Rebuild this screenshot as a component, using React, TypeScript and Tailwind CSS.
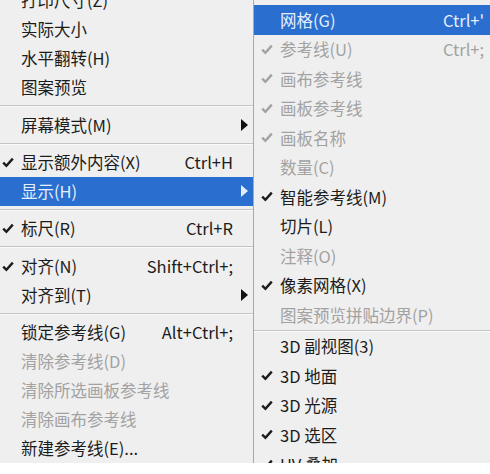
type Item =
  | { sep: true }
  | {
      sep?: false;
      label: string;
      shortcut?: string;
      checked?: boolean;
      disabled?: boolean;
      arrow?: boolean;
      active?: boolean;
    };

const leftItems: Item[] = [
  { label: '打印尺寸(Z)' },
  { label: '实际大小' },
  { label: '水平翻转(H)' },
  { label: '图案预览' },
  { sep: true },
  { label: '屏幕模式(M)', arrow: true },
  { sep: true },
  { label: '显示额外内容(X)', shortcut: 'Ctrl+H', checked: true },
  { label: '显示(H)', arrow: true, active: true },
  { sep: true },
  { label: '标尺(R)', shortcut: 'Ctrl+R', checked: true },
  { sep: true },
  { label: '对齐(N)', shortcut: 'Shift+Ctrl+;', checked: true },
  { label: '对齐到(T)', arrow: true },
  { sep: true },
  { label: '锁定参考线(G)', shortcut: 'Alt+Ctrl+;' },
  { label: '清除参考线(D)', disabled: true },
  { label: '清除所选画板参考线', disabled: true },
  { label: '清除画布参考线', disabled: true },
  { label: '新建参考线(E)...' },
];

const subItems: Item[] = [
  { label: '网格(G)', shortcut: "Ctrl+'", active: true },
  { label: '参考线(U)', shortcut: 'Ctrl+;', checked: true, disabled: true },
  { label: '画布参考线', checked: true, disabled: true },
  { label: '画板参考线', checked: true, disabled: true },
  { label: '画板名称', checked: true, disabled: true },
  { label: '数量(C)', disabled: true },
  { label: '智能参考线(M)', checked: true },
  { label: '切片(L)' },
  { label: '注释(O)', disabled: true },
  { label: '像素网格(X)', checked: true },
  { label: '图案预览拼贴边界(P)', disabled: true },
  { sep: true },
  { label: '3D 副视图(3)' },
  { label: '3D 地面', checked: true },
  { label: '3D 光源', checked: true },
  { label: '3D 选区', checked: true },
  { label: 'UV 叠加', checked: true },
];

function Check({ className }: { className: string }) {
  return (
    <svg width="12" height="11" viewBox="0 0 12 11" className={className}>
      <path d="M1.2 5.6 L4.4 8.8 L10.8 1.6" fill="none" stroke="currentColor" strokeWidth="2.4" />
    </svg>
  );
}

function Arrow({ light }: { light?: boolean }) {
  return (
    <svg width="7" height="12" viewBox="0 0 7 12" className={light ? 'text-[#e4edfa]' : 'text-[#111]'}>
      <path d="M0 0 L7 6 L0 12 Z" fill="currentColor" />
    </svg>
  );
}

function Separator({ h }: { h: string }) {
  return (
    <div className={`${h} flex flex-col justify-center`}>
      <div className="h-px bg-[#c4c4c4]" />
      <div className="h-px bg-[#fafafa]" />
    </div>
  );
}

function tone(it: { disabled?: boolean; active?: boolean }) {
  if (it.active) return 'bg-[#2a6fcf] text-[#e6eefb]';
  if (it.disabled) return 'text-[#a2a2a2]';
  return 'text-[#1c1c1c]';
}

export default function App() {
  return (
    <div
      className="w-[490px] h-[474px] bg-white overflow-hidden text-[16.5px]"
      style={{ fontFamily: '"Noto Sans CJK SC", "Noto Sans", sans-serif' }}
    >
      <div className="h-[463px] overflow-hidden flex bg-[#efefef]">
        {/* main menu */}
        <div className="w-[253px] shrink-0 flex flex-col -mt-[14px]">
          {leftItems.map((it, i) =>
            it.sep ? (
              <Separator key={i} h="h-[9px]" />
            ) : (
              <div key={i} className={`h-[29px] shrink-0 flex items-center leading-none ${tone(it)}`}>
                <div className="w-[21px] pl-[2px] flex items-center">
                  {it.checked && <Check className="" />}
                </div>
                <span className="flex-1 whitespace-nowrap">{it.label}</span>
                {it.shortcut && <span className="whitespace-nowrap">{it.shortcut}</span>}
                <div className="w-[20px] pl-[8px] flex items-center">{it.arrow && <Arrow light={it.active} />}</div>
              </div>
            )
          )}
        </div>

        {/* submenu */}
        <div className="flex-1 border-l border-[#a9a9a9] pt-[5px] flex flex-col overflow-hidden">
          {subItems.map((it, i) =>
            it.sep ? (
              <Separator key={i} h="h-[7px]" />
            ) : (
              <div key={i} className={`h-[29.5px] shrink-0 flex items-center leading-none ${tone(it)}`}>
                <div className="w-[26px] pl-[7px] flex items-center">
                  {it.checked && <Check className="" />}
                </div>
                <span className="w-[163px] shrink-0 whitespace-nowrap">{it.label}</span>
                {it.shortcut && <span className="whitespace-nowrap">{it.shortcut}</span>}
              </div>
            )
          )}
        </div>
      </div>
    </div>
  );
}
